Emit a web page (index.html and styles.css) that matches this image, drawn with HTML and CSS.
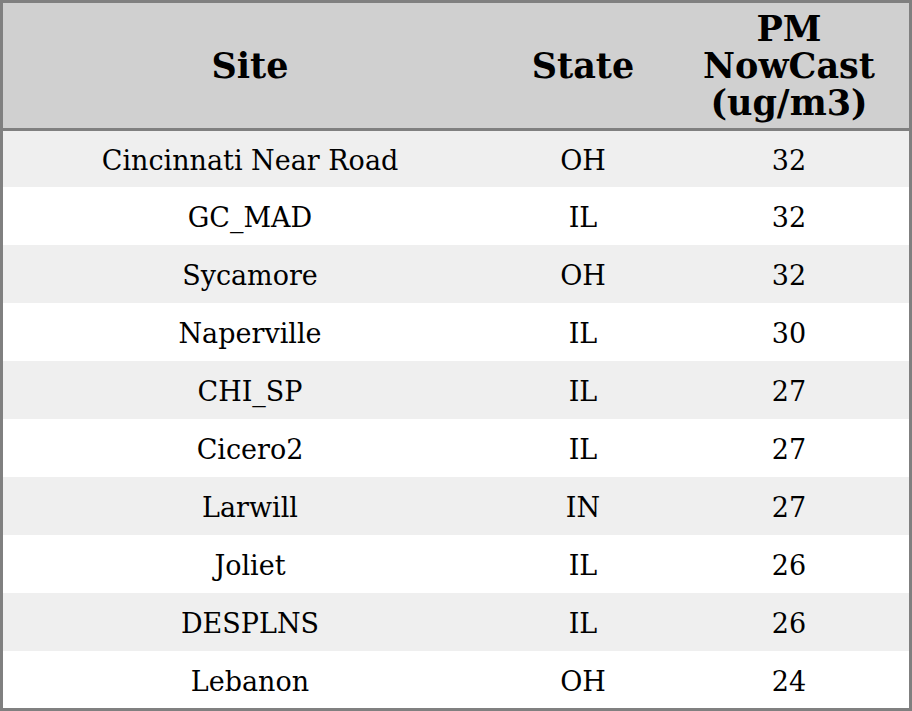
FILE: index.html
```html
<!DOCTYPE html>
<html>
<head>
<meta charset="utf-8">
<link rel="stylesheet" href="styles.css">
</head>
<body>
<div class="frame">
  <table class="grid">
    <colgroup>
      <col class="c-site">
      <col class="c-state">
      <col class="c-pm">
    </colgroup>
    <thead>
      <tr><th>Site</th><th>State</th><th>PM<br>NowCast<br>(ug/m3)</th></tr>
    </thead>
    <tbody>
      <tr class="first"><td>Cincinnati Near Road</td><td>OH</td><td>32</td></tr>
      <tr><td>GC_MAD</td><td>IL</td><td>32</td></tr>
      <tr><td>Sycamore</td><td>OH</td><td>32</td></tr>
      <tr><td>Naperville</td><td>IL</td><td>30</td></tr>
      <tr><td>CHI_SP</td><td>IL</td><td>27</td></tr>
      <tr><td>Cicero2</td><td>IL</td><td>27</td></tr>
      <tr><td>Larwill</td><td>IN</td><td>27</td></tr>
      <tr><td>Joliet</td><td>IL</td><td>26</td></tr>
      <tr><td>DESPLNS</td><td>IL</td><td>26</td></tr>
      <tr><td>Lebanon</td><td>OH</td><td>24</td></tr>
    </tbody>
  </table>
</div>
</body>
</html>
```
FILE: styles.css
```css
html, body {
  margin: 0;
  padding: 0;
  background: #ffffff;
}
.frame {
  width: 912px;
  height: 711px;
  box-sizing: border-box;
  border: 3px solid #808080;
  overflow: hidden;
}
.grid {
  width: 906px;
  border-collapse: collapse;
  border-spacing: 0;
  table-layout: fixed;
  font-family: "DejaVu Serif", serif;
  color: #000000;
}
.c-site { width: 494px; }
.c-state { width: 172px; }
.c-pm { width: 240px; }
.grid th {
  background: #d0d0d0;
  height: 125px;
  padding: 0;
  font-size: 35px;
  font-weight: bold;
  line-height: 37px;
  text-align: center;
  vertical-align: middle;
  border-bottom: 3px solid #808080;
}
.grid td {
  height: 54px;
  padding: 4px 0 0 0;
  font-size: 27px;
  line-height: 32px;
  text-align: center;
  vertical-align: middle;
}
.grid tbody tr.first td {
  height: 52px;
}
.grid tbody tr:nth-child(odd) td {
  background: #efefef;
}
```
